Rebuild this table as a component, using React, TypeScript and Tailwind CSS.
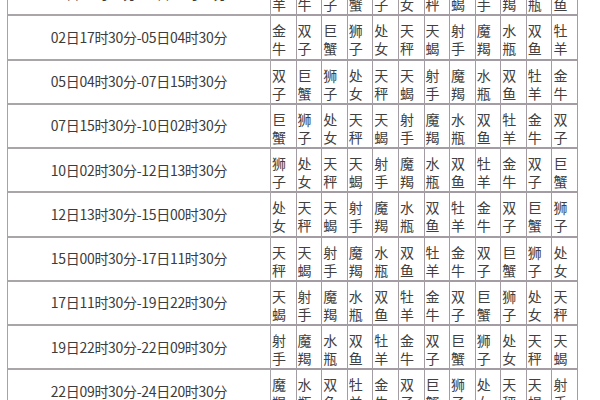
import React from "react";

const SIGNS = ["牡羊", "金牛", "双子", "巨蟹", "狮子", "处女", "天秤", "天蝎", "射手", "魔羯", "水瓶", "双鱼"];

const TIMES = [
  "31日06时30分-02日17时30分",
  "02日17时30分-05日04时30分",
  "05日04时30分-07日15时30分",
  "07日15时30分-10日02时30分",
  "10日02时30分-12日13时30分",
  "12日13时30分-15日00时30分",
  "15日00时30分-17日11时30分",
  "17日11时30分-19日22时30分",
  "19日22时30分-22日09时30分",
  "22日09时30分-24日20时30分",
];

export default function App() {
  return (
    <div
      className="w-[600px] h-[400px] overflow-hidden bg-white antialiased"
      style={{ fontFamily: '"Noto Sans CJK SC", sans-serif' }}
    >
      <div className="ml-[7px] -mt-[28px] w-[571px] border-l border-[#a6a2a6] grid grid-cols-[263px_repeat(12,1fr)] auto-rows-[44.25px]">
        {TIMES.map((t, r) => (
          <React.Fragment key={r}>
            <div className="border-r border-b-2 border-[#a9a5a9] flex items-center justify-center text-[14px] text-[#3c3c3c] tracking-[-0.3px]">
              {t}
            </div>
            {SIGNS.map((_, c) => {
              const s = SIGNS[(r + c) % 12];
              return (
                <div
                  key={c}
                  className="border-r border-b-2 border-[#a39ca3] pl-px pt-[5px] text-[14px] leading-[18px] text-[#404040]"
                >
                  <span className="block">{s[0]}</span>
                  <span className="block">{s[1]}</span>
                </div>
              );
            })}
          </React.Fragment>
        ))}
      </div>
    </div>
  );
}
